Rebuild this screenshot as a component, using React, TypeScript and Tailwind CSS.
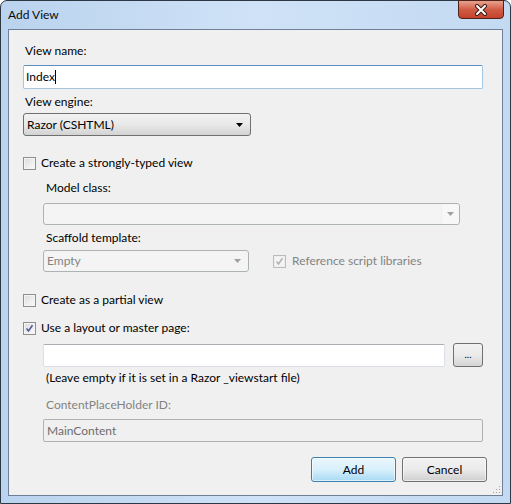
import React from 'react';

const font = { fontFamily: 'Lato, "Noto Sans", "Liberation Sans", sans-serif' };

const CheckBox: React.FC<{ checked?: boolean; disabled?: boolean }> = ({ checked, disabled }) => (
  <div
    className={`w-[13px] h-[13px] border flex items-center justify-center shrink-0 ${
      disabled ? 'border-[#bcbcbc] bg-[#f4f4f4]' : 'border-[#8f8f8f] bg-gradient-to-br from-[#dcdcdc] to-[#fbfbfb]'
    }`}
  >
    <div className={`w-[11px] h-[11px] border ${disabled ? 'border-[#ededed]' : 'border-[#f4f4f4]'} flex items-center justify-center`}>
      {checked && (
        <svg width="9" height="9" viewBox="0 0 9 9">
          <path
            d="M1.5 4.5 L3.5 7 L7.5 1.2"
            fill="none"
            stroke={disabled ? '#b3b3b3' : '#4a5f97'}
            strokeWidth="1.6"
          />
        </svg>
      )}
    </div>
  </div>
);

const Arrow: React.FC<{ color: string }> = ({ color }) => (
  <svg width="7" height="4" viewBox="0 0 7 4">
    <path d="M0 0 H7 L3.5 4 Z" fill={color} />
  </svg>
);

const Label: React.FC<{ children: React.ReactNode; className?: string }> = ({ children, className }) => (
  <div className={`h-4 leading-4 ${className ?? ''}`}>{children}</div>
);

const App: React.FC = () => {
  return (
    <div className="w-[511px] h-[504px] bg-white text-[12px] text-black" style={font}>
      <div className="w-[511px] h-[504px] flex flex-col rounded-t-[7px] border border-[#2e3844] bg-gradient-to-r from-[#bad3ee] via-[#cfe2f7] to-[#c3daf2]">
        {/* title bar */}
        <div className="h-[28px] flex items-start shrink-0">
          <div className="pl-[7px] pt-[6px] leading-4 text-[#0b0b0b]">Add View</div>
          <div className="ml-auto mr-[6px] w-[46px] h-[19px] -mt-px rounded-b-[4px] border border-[#4e2218] bg-gradient-to-b from-[#e7a290] via-[#d05c45] to-[#c6412b] flex items-center justify-center">
            <svg width="14" height="12" viewBox="0 0 14 12">
              <path d="M3 2 L11 10 M11 2 L3 10" stroke="#3b1d17" strokeWidth="4" strokeLinecap="round" />
              <path d="M3 2 L11 10 M11 2 L3 10" stroke="#ffffff" strokeWidth="2" strokeLinecap="round" />
            </svg>
          </div>
        </div>

        {/* client area */}
        <div className="mx-[7px] mb-[7px] flex-1 border border-[#6f8096] bg-[#f0f0f0] pl-[14px] pr-[19px] pt-[13px] relative">
          <Label className="pl-[2px]">View name:</Label>
          <div className="mt-[6px] h-[24px] border border-[#a6c6e0] border-t-[#5b8fbd] rounded-[2px] bg-white flex items-center px-[2px]">
            <span>Index</span>
            <span className="w-px h-[14px] bg-black" />
          </div>

          <Label className="pl-[2px] mt-[5px]">View engine:</Label>
          <div className="mt-[3px] w-[228px] h-[23px] rounded-[3px] border border-[#707070] bg-gradient-to-b from-[#f2f2f2] via-[#e9e9e9] to-[#d3d3d3] flex items-center pl-[3px] pr-[7px]">
            <span>Razor (CSHTML)</span>
            <span className="ml-auto">
              <Arrow color="#000000" />
            </span>
          </div>

          <div className="mt-[19px] h-4 flex items-center gap-[5px]">
            <CheckBox />
            <span>Create a strongly-typed view</span>
          </div>

          <div className="ml-[20px]">
            <Label className="pl-[3px] mt-[9px]">Model class:</Label>
            <div className="mt-[7px] w-[417px] h-[22px] rounded-[3px] border border-[#adb2b5] bg-[#f4f4f4] flex items-center justify-end">
              <div className="w-[18px] h-full flex items-center justify-center border-l border-[#f0f0f0] bg-[#f7f7f7] rounded-r-[3px]">
                <Arrow color="#a0a0a0" />
              </div>
            </div>

            <Label className="pl-[3px] mt-[5px]">Scaffold template:</Label>
            <div className="mt-[4px] flex items-center">
              <div className="w-[206px] h-[22px] rounded-[3px] border border-[#adb2b5] bg-[#f4f4f4] flex items-center pl-[3px] pr-[7px] text-[#838383]">
                <span>Empty</span>
                <span className="ml-auto">
                  <Arrow color="#a0a0a0" />
                </span>
              </div>
              <div className="ml-[24px] flex items-center gap-[6px] text-[#838383]">
                <CheckBox checked disabled />
                <span>Reference script libraries</span>
              </div>
            </div>
          </div>

          <div className="mt-[20px] h-4 flex items-center gap-[5px]">
            <CheckBox />
            <span>Create as a partial view</span>
          </div>
          <div className="mt-[12px] h-4 flex items-center gap-[5px]">
            <CheckBox checked />
            <span>Use a layout or master page:</span>
          </div>

          <div className="ml-[20px]">
            <div className="mt-[7px] flex items-center">
              <div className="w-[402px] h-[23px] border border-[#dbdfe6] border-t-[#abadb3] rounded-[2px] bg-white" />
              <div className="ml-[8px] w-[30px] h-[24px] rounded-[3px] border border-[#707070] bg-gradient-to-b from-[#f2f2f2] via-[#ebebeb] to-[#d4d4d4] flex items-center justify-center text-[10px] leading-none pb-[2px]">
                ...
              </div>
            </div>
            <Label className="pl-[3px] mt-[3px]">(Leave empty if it is set in a Razor _viewstart file)</Label>
            <Label className="pl-[3px] mt-[11px] text-[#838383]">ContentPlaceHolder ID:</Label>
            <div className="mt-[6px] h-[23px] rounded-[2px] border border-[#adb2b5] bg-[#f0f0f0] flex items-center pl-[3px] text-[#6d6d6d]">
              MainContent
            </div>
          </div>

          <div className="mt-[15px] flex justify-end gap-[6px] -mr-[4px]">
            <div className="w-[85px] h-[25px] rounded-[3px] border border-[#3c7fb1] bg-gradient-to-b from-[#eaf6fd] via-[#d9f0fc] to-[#a7d9f5] shadow-[inset_0_0_0_1px_rgba(255,255,255,0.6)] flex items-center justify-center">
              Add
            </div>
            <div className="w-[85px] h-[25px] rounded-[3px] border border-[#707070] bg-gradient-to-b from-[#f2f2f2] via-[#ebebeb] to-[#cfcfcf] shadow-[inset_0_0_0_1px_rgba(255,255,255,0.6)] flex items-center justify-center">
              Cancel
            </div>
          </div>

          {/* resize grip */}
          <svg className="absolute right-[1px] bottom-[1px]" width="10" height="10" viewBox="0 0 10 10">
            {[
              [8, 2],
              [8, 5],
              [5, 5],
              [8, 8],
              [5, 8],
              [2, 8],
            ].map(([x, y], i) => (
              <rect key={i} x={x} y={y} width="1" height="1" fill="#a0a0a0" />
            ))}
          </svg>
        </div>
      </div>
    </div>
  );
};

export default App;
